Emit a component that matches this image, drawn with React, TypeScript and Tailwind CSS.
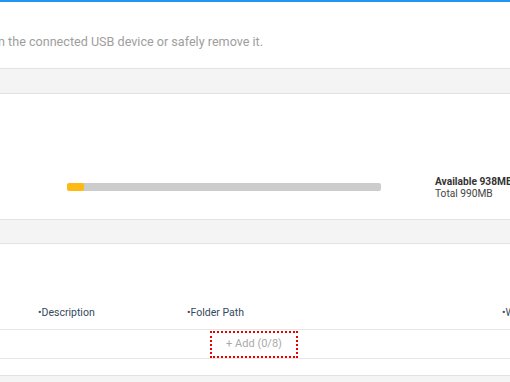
export default function App() {
  return (
    <div className="w-[510px] h-[382px] overflow-hidden bg-white font-['Roboto',sans-serif]">
      <div className="h-[2px] bg-[#2196f3]" />

      {/* intro text */}
      <div className="h-[66px] flex items-center pt-[15px]">
        <p className="-ml-[2px] whitespace-nowrap text-[12.6px] text-[#9e9e9e]">
          n the connected USB device or safely remove it.
        </p>
      </div>

      <div className="h-[26px] border-y border-[#e2e2e2] bg-[#f4f4f4]" />

      {/* storage usage */}
      <div className="h-[125px] flex items-end pb-[19px]">
        <div className="ml-[67px] mb-[9px] h-[8px] w-[314px] shrink-0 rounded-[2px] bg-[#cccccc] overflow-hidden">
          <div className="h-full w-[17px] rounded-[2px] bg-[#ffb913]" />
        </div>
        <div className="ml-[54px] shrink-0 whitespace-nowrap text-[10.2px] leading-[12px] text-[#333]">
          <div className="font-bold">Available 938MB</div>
          <div className="text-[#444]">Total 990MB</div>
        </div>
      </div>

      <div className="h-[25px] border-y border-[#e2e2e2] bg-[#f4f4f4]" />

      {/* folder table */}
      <div className="h-[85px] flex items-end pb-[9px] text-[10.5px] leading-[14px] text-[#34495e] whitespace-nowrap">
        <span className="ml-[38px] w-[149px] shrink-0">•Description</span>
        <span className="w-[315px] shrink-0">•Folder Path</span>
        <span className="shrink-0">•W</span>
      </div>

      <div className="h-[30px] border-y border-[#e6e6e6] flex items-center justify-center">
        <button className="h-[27px] w-[88px] border-2 border-dotted border-[#e60000] text-[11px] text-[#aaaaaa] -translate-x-[1px]">
          + Add (0/8)
        </button>
      </div>

      <div className="h-[16px]" />
      <div className="h-[20px] border-t border-[#e2e2e2] bg-[#f4f4f4]" />
    </div>
  );
}
